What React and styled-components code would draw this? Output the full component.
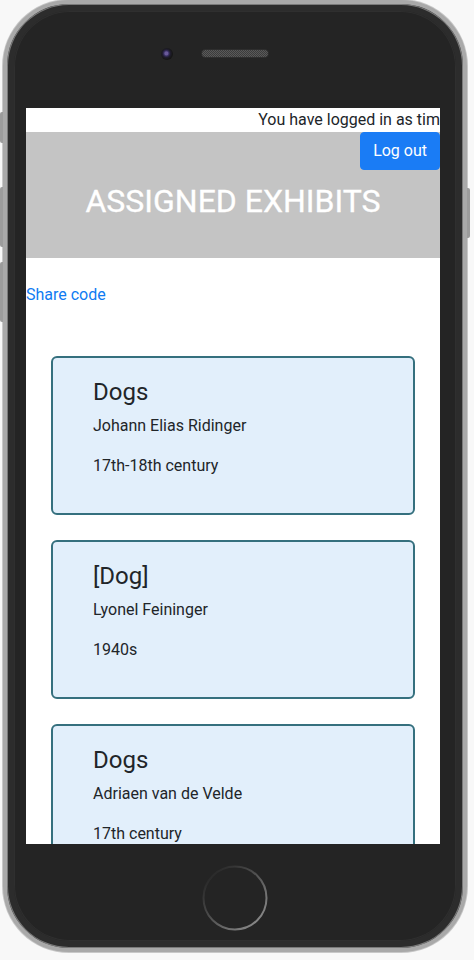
import React from "react";
import styled, { createGlobalStyle } from "styled-components";

const Global = createGlobalStyle`
  html, body { margin: 0; padding: 0; background: #f8f8f8; }
  body { font-family: Roboto, "Liberation Sans", sans-serif; }
  * { box-sizing: border-box; }
`;

const Stage = styled.div`
  display: flex;
  padding-left: 3px;
  width: 474px;
  height: 960px;
`;

const Phone = styled.div`
  position: relative;
  width: 464px;
  height: 952px;
  border-radius: 66px;
  border: 4px solid #a9a9a9;
  background: #2c2c2c;
  padding: 7px;
  box-shadow: inset 0 0 0 1px #7a7a7a, 0 0 0 1px #c8c8c8;
`;

const SideButton = styled.div`
  position: absolute;
  top: ${(p) => p.$top}px;
  height: ${(p) => p.$h}px;
  width: 3px;
  background: #9c9c9c;
  ${(p) => (p.$right ? "right: -7px; border-radius: 0 2px 2px 0;" : "left: -7px; border-radius: 2px 0 0 2px;")}
`;

const Face = styled.div`
  height: 100%;
  border-radius: 56px;
  background: #242424;
  display: flex;
  flex-direction: column;
  box-shadow: inset 0 0 0 1px #2f2f2f;
`;

const TopBezel = styled.div`
  height: 97px;
  display: grid;
  grid-template-columns: 1fr auto 1fr;
  align-items: center;
  padding-bottom: 12px;
`;

const Camera = styled.div`
  justify-self: end;
  margin-right: 29px;
  width: 12px;
  height: 12px;
  border-radius: 50%;
  background: radial-gradient(circle at 45% 45%, #6a5a9a 0 1.5px, #3a3166 2.5px, #201d2e 4px, #161616 6px);
`;

const Speaker = styled.div`
  width: 66px;
  height: 7px;
  border-radius: 4px;
  background-color: #4a4a4a;
  background-image: repeating-conic-gradient(#5a5a5a 0 25%, #3c3c3c 0 50%);
  background-size: 2px 2px;
  box-shadow: 0 0 0 1px #2e2e2e;
`;

const Screen = styled.div`
  height: 736px;
  margin: 0 16px 0 12px;
  background: #ffffff;
  overflow: hidden;
  color: #212529;
  font-family: Roboto, "Liberation Sans", sans-serif;
`;

const TopBar = styled.div`
  text-align: right;
  font-size: 16px;
  line-height: 24px;
  white-space: nowrap;
`;

const Header = styled.header`
  background: #c4c4c4;
  padding-bottom: 38px;
`;

const HeaderActions = styled.div`
  display: flex;
  justify-content: flex-end;
`;

const LogoutButton = styled.button`
  font-family: inherit;
  font-size: 16px;
  line-height: 24px;
  padding: 6px 12px;
  color: #ffffff;
  background: #1a7cf5;
  border: 1px solid #1a7cf5;
  border-radius: 4px;
`;

const Title = styled.h1`
  margin: 12px 0 0;
  font-size: 32px;
  line-height: 1.2;
  font-weight: 400;
  color: #ffffff;
  text-align: center;
  -webkit-text-stroke: 0.3px #ffffff;
`;

const ShareLink = styled.a`
  display: block;
  margin-top: 25px;
  font-size: 16px;
  line-height: 24px;
  color: #0f7bf2;
  text-decoration: none;
`;

const CardList = styled.div`
  margin-top: 49px;
  padding: 0 25px;
  display: flex;
  flex-direction: column;
  gap: 25px;
`;

const Card = styled.div`
  flex-shrink: 0;
  border: 2px solid #35707e;
  border-radius: 6px;
  background: #e2effb;
  padding: 20px 40px 19px;
`;

const CardTitle = styled.h3`
  margin: 0 0 7px;
  font-size: 24px;
  line-height: 1.2;
  font-weight: 400;
`;

const Meta = styled.p`
  margin: 0 0 16px;
  font-size: 16px;
  line-height: 24px;
`;

const BottomBezel = styled.div`
  flex: 1;
  display: flex;
  justify-content: center;
  padding-top: 21px;
`;

const HomeButton = styled.svg`
  width: 66px;
  height: 66px;
`;

const exhibits = [
  { title: "Dogs", artist: "Johann Elias Ridinger", date: "17th-18th century" },
  { title: "[Dog]", artist: "Lyonel Feininger", date: "1940s" },
  { title: "Dogs", artist: "Adriaen van de Velde", date: "17th century" },
];

export default function App() {
  return (
    <>
      <Global />
      <Stage>
        <Phone>
          <SideButton $top={108} $h={31} />
          <SideButton $top={183} $h={60} />
          <SideButton $top={258} $h={60} />
          <SideButton $right $top={184} $h={50} />
          <Face>
            <TopBezel>
              <Camera />
              <Speaker />
              <div />
            </TopBezel>
            <Screen>
              <TopBar>You have logged in as tim</TopBar>
              <Header>
                <HeaderActions>
                  <LogoutButton>Log out</LogoutButton>
                </HeaderActions>
                <Title>ASSIGNED EXHIBITS</Title>
              </Header>
              <ShareLink href="#">Share code</ShareLink>
              <CardList>
                {exhibits.map((e, i) => (
                  <Card key={i}>
                    <CardTitle>{e.title}</CardTitle>
                    <Meta>{e.artist}</Meta>
                    <Meta>{e.date}</Meta>
                  </Card>
                ))}
              </CardList>
            </Screen>
            <BottomBezel>
              <HomeButton viewBox="0 0 66 66">
                <defs>
                  <linearGradient id="homeRing" x1="0.1" y1="0.1" x2="0.9" y2="0.9">
                    <stop offset="0" stopColor="#262626" />
                    <stop offset="0.4" stopColor="#4a4a4a" />
                    <stop offset="1" stopColor="#8a8a8a" />
                  </linearGradient>
                </defs>
                <circle cx="33" cy="33" r="31.5" fill="#242424" stroke="url(#homeRing)" strokeWidth="2" />
              </HomeButton>
            </BottomBezel>
          </Face>
        </Phone>
      </Stage>
    </>
  );
}
